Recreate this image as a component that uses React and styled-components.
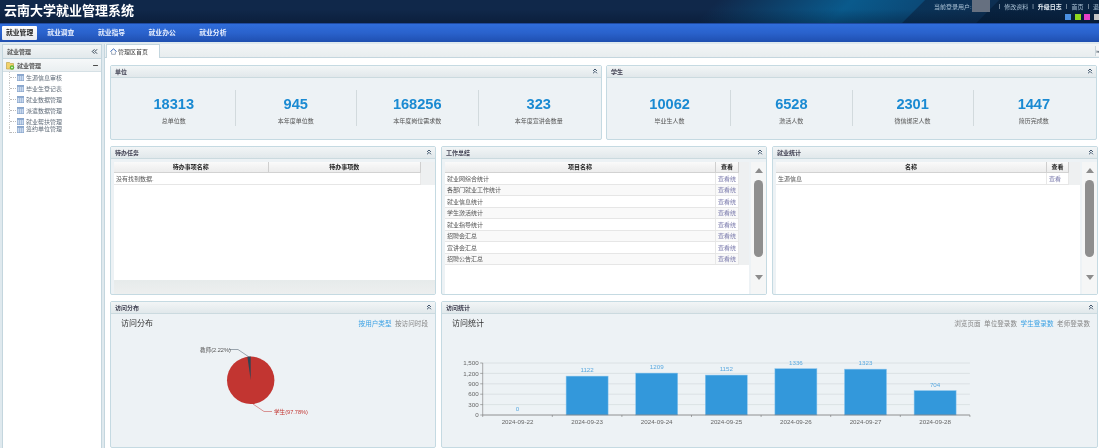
import styled, { createGlobalStyle } from 'styled-components';
import { ChevronsUp, ChevronsLeft, Minus } from 'lucide-react';

const GlobalStyle = createGlobalStyle`
    html, body {
        margin: 0;
        padding: 0;
        background: #fff;
        overflow: hidden;
    }
    * { box-sizing: border-box; }
    #root {
        font-family: "Liberation Sans", "Noto Sans CJK SC", sans-serif;
        filter: blur(0.3px);
    }
`;

const Page = styled.div`
    width: 1099px;
    height: 448px;
    display: flex;
    flex-direction: column;
    overflow: hidden;
    color: #444;
`;

const Header = styled.header`
    height: 23px;
    flex: none;
    display: flex;
    justify-content: space-between;
    background:
        linear-gradient(180deg, rgba(0, 0, 0, 0) 40%, rgba(0, 10, 30, 0.3) 100%),
        linear-gradient(135deg, #10284a 0, #10284a 64%, #0a5a8c 76%, #0b4a78 82.4%, #0a3358 82.5%, #0d2f52 89%, #082340 89.1%, #0a2442 100%);
`;

const Logo = styled.h1`
    margin: 0 0 0 4px;
    font-size: 13px;
    line-height: 22px;
    font-weight: 700;
    color: #fff;
    white-space: nowrap;
`;

const HeaderRight = styled.div`
    width: 165px;
    flex: none;
    display: flex;
    flex-direction: column;
    align-items: flex-end;
`;

const UserLinks = styled.div`
    width: 165px;
    height: 12px;
    display: flex;
    align-items: center;
    font-size: 6px;
    color: #a9c0d4;
    white-space: nowrap;
`;

const Redacted = styled.span`
    width: 18px;
    height: 12px;
    margin-right: 5px;
    flex: none;
    background: #667080;
`;

const Sep = styled.span`
    margin: 0 4px;
    color: #c5d2de;
`;

const Strong = styled.span`
    color: #e6eef5;
    font-weight: 700;
`;

const Swatches = styled.div`
    display: flex;
    gap: 3.5px;
    margin-top: 2px;
    margin-right: -0.5px;
`;

const Swatch = styled.i`
    width: 6px;
    height: 6px;
    display: block;
    background: ${(p) => p.$color};
`;

const Nav = styled.nav`
    height: 18.5px;
    flex: none;
    display: flex;
    align-items: center;
    padding-left: 2px;
    border-top: 1px solid #1f4aa0;
    background: linear-gradient(180deg, #2f6ddb 0%, #2a62cc 50%, #1f4fb0 100%);
`;

const NavItem = styled.a`
    height: 14px;
    padding: 0 4px;
    margin-right: ${(p) => (p.$active ? '6px' : '15.5px')};
    font-size: 6.8px;
    line-height: 14px;
    font-weight: 700;
    white-space: nowrap;
    color: ${(p) => (p.$active ? '#222' : '#eaf1ff')};
    background: ${(p) => (p.$active ? 'linear-gradient(180deg, #fff, #e6e9ee)' : 'none')};
    border-radius: 1px;
`;

const Body = styled.div`
    flex: 1;
    min-height: 0;
    display: flex;
    padding: 2.5px 0 0 2px;
    gap: 2px;
    background: #dfe9ee;
`;

const Side = styled.aside`
    width: 100px;
    flex: none;
    background: #fff;
    border: 1px solid #c4d6de;
    border-bottom: 0;
`;

const SideHead = styled.div`
    height: 14px;
    display: flex;
    align-items: center;
    justify-content: space-between;
    padding: 0 2px 0 4px;
    font-size: 6px;
    font-weight: 700;
    color: #555;
    background: linear-gradient(180deg, #f2f5f6, #e2e9ec);
    border-bottom: 1px solid #c4d6de;
    svg { color: #234; }
`;

const TreeRoot = styled.div`
    height: 13px;
    display: flex;
    align-items: center;
    gap: 2px;
    padding: 0 2px 0 3px;
    font-size: 6px;
    font-weight: 700;
    color: #555;
    background: linear-gradient(180deg, #f6f8f9, #eaeff1);
    border-bottom: 1px solid #d5e0e5;
`;

const TreeLabel = styled.span`
    flex: 1;
`;

const TreeList = styled.ul`
    list-style: none;
    margin: 0;
    padding: 0 0 0 6px;
`;

const TreeItem = styled.li`
    height: 11px;
    display: flex;
    align-items: center;
    font-size: 6px;
    color: #5f6b78;
    white-space: nowrap;
    border-left: 1px dotted #c8c8c8;
    &:last-child { height: 6px; align-items: flex-end; overflow: visible; }
`;

const TreeDash = styled.i`
    width: 6px;
    height: 0;
    margin-right: 1px;
    border-top: 1px dotted #bbb;
`;

const TreeText = styled.span`
    margin-left: 2px;
`;

const Main = styled.main`
    flex: 1;
    min-width: 0;
    display: flex;
    flex-direction: column;
    background: #fff;
    border-left: 1px solid #c4d6de;
`;

const TabBar = styled.div`
    height: 13.5px;
    flex: none;
    display: flex;
    align-items: flex-end;
    justify-content: space-between;
    background: linear-gradient(180deg, #f2f5f6, #e8edef);
    border-bottom: 1px solid #c4d6de;
`;

const Tab = styled.div`
    height: 13.5px;
    margin-left: 1px;
    margin-bottom: -1px;
    padding: 0 11px 0 3px;
    display: flex;
    align-items: center;
    gap: 1px;
    font-size: 6px;
    color: #444;
    background: #fff;
    border: 1px solid #c4d6de;
    border-bottom: 0;
`;

const TabTool = styled.div`
    width: 4px;
    height: 10px;
    margin-bottom: 1px;
    background: #f4f6f7;
    border-left: 1px solid #c9d4d9;
    overflow: hidden;
    font-size: 6px;
    line-height: 10px;
    color: #234;
`;

const Content = styled.div`
    flex: 1;
    display: flex;
    flex-direction: column;
    gap: 6px;
    padding: 7px 2px 0 5px;
`;

const Row = styled.div`
    display: grid;
    grid-template-columns: ${(p) => p.$cols};
    height: ${(p) => p.$h}px;
    flex: none;
    column-gap: ${(p) => p.$gap}px;
`;

const PanelBox = styled.section`
    min-width: 0;
    display: flex;
    flex-direction: column;
    border: 1px solid #c5dae2;
    border-radius: 2px;
    background: #edf2f5;
`;

const PanelTitle = styled.div`
    height: 12px;
    flex: none;
    display: flex;
    align-items: center;
    justify-content: space-between;
    padding: 0 2px 0 4px;
    font-size: 6px;
    font-weight: 700;
    color: #445;
    background: linear-gradient(180deg, #f2f5f6, #e1e8eb);
    border-bottom: 1px solid #cbdadf;
    svg { color: #1d3550; }
`;

const PanelBody = styled.div`
    flex: 1;
    min-height: 0;
    display: flex;
    position: relative;
`;

const Stats = styled.div`
    flex: 1;
    display: grid;
    grid-template-columns: repeat(4, 1fr);
    padding: 12px 2px 0;
`;

const Stat = styled.div`
    height: 36px;
    display: flex;
    flex-direction: column;
    align-items: center;
    border-left: ${(p) => (p.$first ? '0' : '1px solid #d2dadd')};
`;

const StatValue = styled.div`
    margin-top: 5px;
    font-size: 14.6px;
    line-height: 18px;
    font-weight: 700;
    color: #1a8ad2;
`;

const StatLabel = styled.div`
    margin-top: 4px;
    font-size: 6px;
    line-height: 8px;
    color: #555;
`;

const TableWrap = styled.div`
    flex: 1;
    min-width: 0;
    margin: 3px 0 0 3px;
    width: ${(p) => p.$w}px;
    display: flex;
    flex-direction: column;
    background: #fff;
`;

const TableHeadBg = styled.div`
    flex: 1;
    display: flex;
    flex-direction: column;
`;

const Table = styled.table`
    border-collapse: collapse;
    table-layout: fixed;
    width: ${(p) => p.$w}px;
    font-size: 6px;
    position: relative;
`;

const HeadRow = styled.div`
    background: #eef0f1;
`;

const Th = styled.th`
    height: 11px;
    padding: 0;
    font-size: 6px;
    font-weight: 700;
    color: #222;
    background: linear-gradient(180deg, #fafafa, #ececec);
    border-right: 1px solid #cfcfcf;
    border-bottom: 1.5px solid #d2d2d2;
    width: ${(p) => (p.$w ? `${p.$w}px` : 'auto')};
`;

const Td = styled.td`
    height: 11.5px;
    padding: 0 0 0 2px;
    color: #555;
    white-space: nowrap;
    background: ${(p) => (p.$odd ? '#f9f9f9' : '#fff')};
    border-right: 1px solid #e8e8e8;
    border-bottom: 1px solid #e6e6e6;
`;

const LinkCell = styled.span`
    color: #8080b0;
`;

const HScroll = styled.div`
    height: 14px;
    flex: none;
    background: linear-gradient(180deg, #e6ebeb, #edefef);
`;

const VScroll = styled.div`
    width: 15px;
    flex: none;
    margin-top: 3px;
    display: flex;
    flex-direction: column;
    align-items: center;
    background: #f5f6f6;
    margin-left: 2px;
`;

const ScrollUp = styled.i`
    margin-top: 6px;
    width: 0;
    height: 0;
    border-left: 4.5px solid transparent;
    border-right: 4.5px solid transparent;
    border-bottom: 5px solid #8c8c8c;
`;

const ScrollThumb = styled.i`
    width: 9px;
    height: 77px;
    margin-top: 7px;
    border-radius: 4.5px;
    background: #8e8e8e;
`;

const ScrollDown = styled.i`
    margin-top: 18px;
    width: 0;
    height: 0;
    border-left: 4.5px solid transparent;
    border-right: 4.5px solid transparent;
    border-top: 5px solid #8c8c8c;
`;

const ChartPane = styled.div`
    flex: 1;
    min-width: 0;
    display: flex;
    flex-direction: column;
`;

const ChartHead = styled.div`
    height: 18px;
    flex: none;
    display: flex;
    align-items: center;
    justify-content: space-between;
    padding: 0 7px 0 10px;
`;

const ChartTitle = styled.div`
    font-size: 8px;
    color: #333;
    margin-top: -1px;
`;

const ChartLinks = styled.div`
    display: flex;
    gap: 3.5px;
    font-size: 6.6px;
`;

const ChartLink = styled.span`
    color: ${(p) => (p.$active ? '#3aa1e4' : '#888')};
`;

const ChartSvg = styled.svg`
    display: block;
    flex: none;
    font-family: "Liberation Sans", "Noto Sans CJK SC", sans-serif;
`;

const Panel = ({ title, collapse = true, children }) => (
    <PanelBox>
        <PanelTitle>
            <span>{title}</span>
            {collapse && <ChevronsUp size={8} strokeWidth={2.5} />}
        </PanelTitle>
        <PanelBody>{children}</PanelBody>
    </PanelBox>
);

const FolderIcon = () => (
    <svg width="9" height="10" viewBox="0 0 9 10">
        <path d="M0.5 2.5h3l1 1h3v5.5h-7z" fill="#f2d26b" stroke="#b99a3a" strokeWidth="0.6" />
        <circle cx="6" cy="7.5" r="2.2" fill="#5cb531" />
        <path d="M5 7.5h2M6 6.5v2" stroke="#fff" strokeWidth="0.6" />
    </svg>
);

const GridIcon = () => (
    <svg width="7" height="7" viewBox="0 0 7 7">
        <rect x="0.3" y="0.3" width="6.4" height="6.4" fill="#c9d9ee" stroke="#7f9fc8" strokeWidth="0.6" />
        <rect x="0.3" y="0.3" width="6.4" height="1.5" fill="#7f9fc8" />
        <path d="M2.5 2v5M4.5 2v5" stroke="#7f9fc8" strokeWidth="0.5" />
    </svg>
);

const HomeIcon = () => (
    <svg width="7" height="7" viewBox="0 0 7 7">
        <path d="M0.4 3.6L3.5 0.9L6.6 3.6" fill="none" stroke="#2f5fb0" strokeWidth="0.9" />
        <path d="M1.6 3.6V6.3H5.4V3.6" fill="none" stroke="#7a8aa0" strokeWidth="0.7" />
    </svg>
);

const PieChart = () => (
    <ChartSvg width="324" height="115" viewBox="111 330 324 115">
        <circle cx="250.7" cy="378.3" r="23.7" fill="#c23531" />
        <path d="M250.7 378.3L247.4 354.8A23.7 23.7 0 0 1 250.7 354.6Z" fill="#2f4554" />
        <path d="M249 355L238 347.5H229" fill="none" stroke="#5f6f7c" strokeWidth="0.6" />
        <text x="200" y="349.5" fontSize="5.6" fill="#555">教师(2.22%)</text>
        <path d="M253 402L264 409.5H272" fill="none" stroke="#c23531" strokeWidth="0.5" />
        <text x="274" y="411.5" fontSize="5.6" fill="#c23531">学生(97.78%)</text>
    </ChartSvg>
);

const visits = [
    ['2024-09-22', 0],
    ['2024-09-23', 1122],
    ['2024-09-24', 1209],
    ['2024-09-25', 1152],
    ['2024-09-26', 1336],
    ['2024-09-27', 1323],
    ['2024-09-28', 704],
];

const BarChart = () => {
    const left = 482.7;
    const base = 413;
    const step = 69.6;
    const scale = 52 / 1500;
    return (
        <ChartSvg width="654" height="115" viewBox="442 330 654 115">
            {[300, 600, 900, 1200, 1500].map((v) => (
                <line key={v} x1={left} x2={left + step * 7} y1={base - v * scale} y2={base - v * scale} stroke="#d7dde0" strokeWidth="0.8" />
            ))}
            {[0, 300, 600, 900, 1200, 1500].map((v) => (
                <g key={v}>
                    <line x1={left - 2.5} x2={left} y1={base - v * scale} y2={base - v * scale} stroke="#777" strokeWidth="0.6" />
                    <text x={left - 4} y={base - v * scale + 2.2} textAnchor="end" fontSize="6.2" fill="#666">{v.toLocaleString('en-US')}</text>
                </g>
            ))}
            <line x1={left} x2={left} y1={base - 52} y2={base} stroke="#777" strokeWidth="0.6" />
            {visits.map(([day, v], i) => {
                const cx = left + step * (i + 0.5);
                const h = v * scale;
                return (
                    <g key={day}>
                        <rect x={cx - 21} y={base - h} width="42" height={h} fill="#3398db" stroke="#8cc6ee" strokeWidth="0.5" />
                        <text x={cx} y={base - h - 4} textAnchor="middle" fontSize="6.2" fill="#5aa9e0">{v}</text>
                        <line x1={left + step * i} x2={left + step * i} y1={base} y2={base + 2} stroke="#777" strokeWidth="0.6" />
                        <text x={cx} y={base + 8.5} textAnchor="middle" fontSize="6.2" fill="#666">{day}</text>
                    </g>
                );
            })}
            <line x1={left + step * 7} x2={left + step * 7} y1={base} y2={base + 2} stroke="#777" strokeWidth="0.6" />
            <line x1={left} x2={left + step * 7} y1={base} y2={base} stroke="#777" strokeWidth="0.8" />
        </ChartSvg>
    );
};

const sideItems = ['生源信息审核', '毕业生登记表', '就业数据管理', '派遣数据管理', '就业帮扶管理', '签约单位管理'];
const unitStats = [
    ['18313', '总单位数'],
    ['945', '本年度单位数'],
    ['168256', '本年度岗位需求数'],
    ['323', '本年度宣讲会数量'],
];
const studentStats = [
    ['10062', '毕业生人数'],
    ['6528', '激活人数'],
    ['2301', '微信绑定人数'],
    ['1447', '简历完成数'],
];
const summaryRows = ['就业网综合统计', '各部门就业工作统计', '就业信息统计', '学生激活统计', '就业指导统计', '招聘会汇总', '宣讲会汇总', '招聘公告汇总'];

const StatGrid = ({ items }) => (
    <Stats>
        {items.map(([value, label], i) => (
            <Stat key={label} $first={i === 0}>
                <StatValue>{value}</StatValue>
                <StatLabel>{label}</StatLabel>
            </Stat>
        ))}
    </Stats>
);

const App = () => (
    <Page>
        <GlobalStyle />
        <Header>
            <Logo>云南大学就业管理系统</Logo>
            <HeaderRight>
                <UserLinks>
                    当前登录用户:<Redacted />
                    <Sep>|</Sep>修改资料<Sep>|</Sep><Strong>升级日志</Strong><Sep>|</Sep>首页<Sep>|</Sep>退出
                </UserLinks>
                <Swatches>
                    <Swatch $color="#4a90e2" />
                    <Swatch $color="#8fd61f" />
                    <Swatch $color="#e83fc8" />
                    <Swatch $color="#c4c4c4" />
                </Swatches>
            </HeaderRight>
        </Header>
        <Nav>
            <NavItem $active>就业管理</NavItem>
            <NavItem>就业调查</NavItem>
            <NavItem>就业指导</NavItem>
            <NavItem>就业办公</NavItem>
            <NavItem>就业分析</NavItem>
        </Nav>
        <Body>
            <Side>
                <SideHead>
                    <span>就业管理</span>
                    <ChevronsLeft size={9} strokeWidth={2.5} />
                </SideHead>
                <TreeRoot>
                    <FolderIcon />
                    <TreeLabel>就业管理</TreeLabel>
                    <Minus size={7} strokeWidth={3} color="#333" />
                </TreeRoot>
                <TreeList>
                    {sideItems.map((item) => (
                        <TreeItem key={item}>
                            <TreeDash />
                            <GridIcon />
                            <TreeText>{item}</TreeText>
                        </TreeItem>
                    ))}
                </TreeList>
            </Side>
            <Main>
                <TabBar>
                    <Tab>
                        <HomeIcon />
                        管理区首页
                    </Tab>
                    <TabTool>»</TabTool>
                </TabBar>
                <Content>
                    <Row $h={75} $cols="492px 491px" $gap={4}>
                        <Panel title="单位"><StatGrid items={unitStats} /></Panel>
                        <Panel title="学生"><StatGrid items={studentStats} /></Panel>
                    </Row>
                    <Row $h={149} $cols="326px 326px 326px" $gap={5}>
                        <Panel title="待办任务">
                            <TableWrap>
                                <HeadRow>
                                    <Table $w={307}>
                                        <thead>
                                            <tr>
                                                <Th $w={154}>待办事项名称</Th>
                                                <Th>待办事项数</Th>
                                            </tr>
                                        </thead>
                                        <tbody>
                                            <tr>
                                                <Td colSpan={2}>没有找到数据.</Td>
                                            </tr>
                                        </tbody>
                                    </Table>
                                </HeadRow>
                                <TableHeadBg />
                                <HScroll />
                            </TableWrap>
                        </Panel>
                        <Panel title="工作总结">
                            <TableWrap>
                                <HeadRow>
                                    <Table $w={294}>
                                        <thead>
                                            <tr>
                                                <Th>项目名称</Th>
                                                <Th $w={23}>查看</Th>
                                            </tr>
                                        </thead>
                                        <tbody>
                                            {summaryRows.map((row, i) => (
                                                <tr key={row}>
                                                    <Td $odd={i % 2 === 1}>{row}</Td>
                                                    <Td $odd={i % 2 === 1}><LinkCell>查看统</LinkCell></Td>
                                                </tr>
                                            ))}
                                        </tbody>
                                    </Table>
                                </HeadRow>
                            </TableWrap>
                            <VScroll>
                                <ScrollUp />
                                <ScrollThumb />
                                <ScrollDown />
                            </VScroll>
                        </Panel>
                        <Panel title="就业统计">
                            <TableWrap>
                                <HeadRow>
                                    <Table $w={293}>
                                        <thead>
                                            <tr>
                                                <Th>名称</Th>
                                                <Th $w={22}>查看</Th>
                                            </tr>
                                        </thead>
                                        <tbody>
                                            <tr>
                                                <Td>生源信息</Td>
                                                <Td><LinkCell>查看</LinkCell></Td>
                                            </tr>
                                        </tbody>
                                    </Table>
                                </HeadRow>
                            </TableWrap>
                            <VScroll>
                                <ScrollUp />
                                <ScrollThumb />
                                <ScrollDown />
                            </VScroll>
                        </Panel>
                    </Row>
                    <Row $h={147} $cols="326px 657px" $gap={5}>
                        <Panel title="访问分布">
                            <ChartPane>
                                <ChartHead>
                                    <ChartTitle>访问分布</ChartTitle>
                                    <ChartLinks>
                                        <ChartLink $active>按用户类型</ChartLink>
                                        <ChartLink>按访问时段</ChartLink>
                                    </ChartLinks>
                                </ChartHead>
                                <PieChart />
                            </ChartPane>
                        </Panel>
                        <Panel title="访问统计">
                            <ChartPane>
                                <ChartHead>
                                    <ChartTitle>访问统计</ChartTitle>
                                    <ChartLinks>
                                        <ChartLink>浏览页面</ChartLink>
                                        <ChartLink>单位登录数</ChartLink>
                                        <ChartLink $active>学生登录数</ChartLink>
                                        <ChartLink>老师登录数</ChartLink>
                                    </ChartLinks>
                                </ChartHead>
                                <BarChart />
                            </ChartPane>
                        </Panel>
                    </Row>
                </Content>
            </Main>
        </Body>
    </Page>
);

export default App;
